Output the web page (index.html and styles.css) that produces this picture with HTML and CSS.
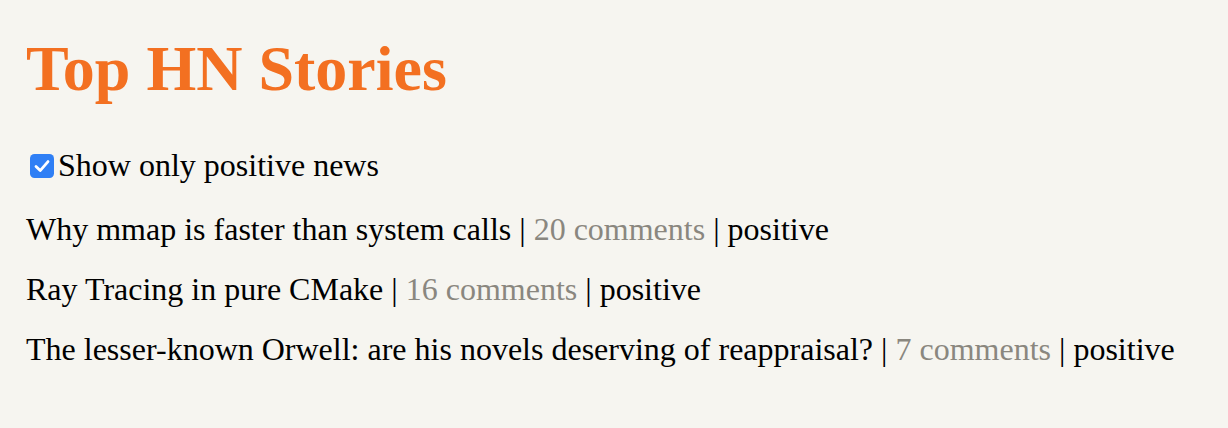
FILE: index.html
```html
<!DOCTYPE html>
<html>
<head>
<meta charset="utf-8">
<link rel="stylesheet" href="styles.css">
</head>
<body>
<main class="page">
  <h1 class="title">Top HN Stories</h1>
  <label class="filter">
    <span class="box"><svg viewBox="0 0 24 24" width="24" height="24"><rect x="0" y="0" width="24" height="24" rx="4.5" fill="#2f7ff5"/><path d="M6 12.5 L10.2 16.6 L18 7.6" fill="none" stroke="#fff" stroke-width="2.8" stroke-linecap="round" stroke-linejoin="round"/></svg></span>Show only positive news
  </label>
  <ul class="stories">
    <li class="story">Why mmap is faster than system calls | <span class="comments">20 comments</span> | positive</li>
    <li class="story">Ray Tracing in pure CMake | <span class="comments">16 comments</span> | positive</li>
    <li class="story">The lesser-known Orwell: are his novels deserving of reappraisal? | <span class="comments">7 comments</span> | positive</li>
  </ul>
</main>
</body>
</html>
```

FILE: styles.css
```css
html, body {
  margin: 0;
  padding: 0;
  background: #f6f5f0;
}
body {
  font-family: "Liberation Serif", "Times New Roman", serif;
  font-size: 32px;
  color: #000;
}
.page {
  display: flex;
  flex-direction: column;
  padding: 32px 26px;
}
.title {
  margin: 0;
  font-size: 64px;
  font-weight: bold;
  color: #f37021;
  line-height: 73px;
}
.filter {
  margin-top: 42px;
  display: flex;
  align-items: center;
  line-height: 37px;
}
.box {
  display: inline-flex;
  width: 24px;
  height: 24px;
  margin: 0 4px 0 4px;
}
.stories {
  list-style: none;
  margin: 27px 0 0 0;
  padding: 0;
  display: flex;
  flex-direction: column;
  gap: 23px;
}
.story {
  line-height: 37px;
}
.comments {
  color: #8a877f;
}
```
